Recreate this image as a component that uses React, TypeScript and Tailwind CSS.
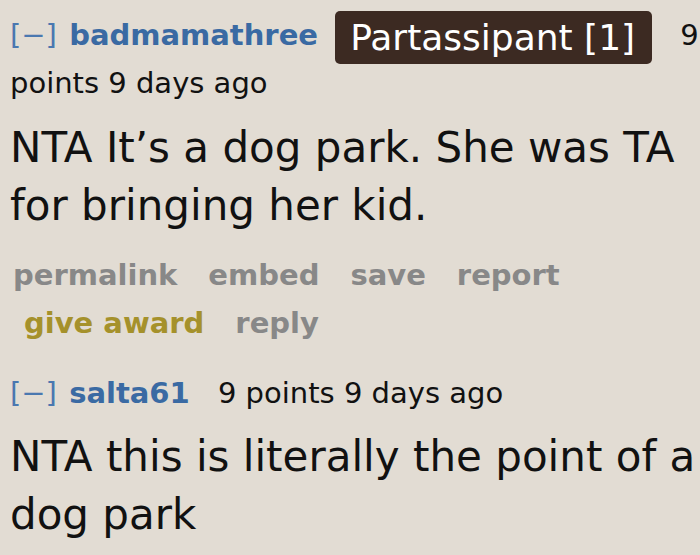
import React from 'react';

const font = { fontFamily: '"DejaVu Sans", Verdana, sans-serif' };

function Tagline({ user, flair, meta }: { user: string; flair?: string; meta: string }) {
  const [first, ...rest] = meta.split(' ');
  return (
    <p className="text-[29px] leading-[48px] text-[#111]">
      <span className="text-[#4a78b0]">[−]</span>{' '}
      <span className="ml-[3px] font-bold text-[#3a6aa3]">{user}</span>{' '}
      {flair && (
        <>
          <span className="mb-[-5px] ml-[8px] inline-block rounded-[5px] bg-[#3c2a22] pl-[15px] pr-[17px] align-[-5px] text-[36px] leading-[53px] text-white">
            {flair}
          </span>{' '}
        </>
      )}
      <span className="ml-[19px]">{first}</span>{' '}
      <span>{rest.join(' ')}</span>
    </p>
  );
}

export default function App() {
  return (
    <div className="h-[555px] w-[700px] overflow-hidden bg-[#e2dcd3] pl-[10px]" style={font}>
      {/* first comment */}
      <div className="pt-[11px]">
        <Tagline user="badmamathree" flair="Partassipant [1]" meta="9 points 9 days ago" />
        <div className="mt-[12px] text-[42px] leading-[58px] text-[#111]">
          NTA It’s a dog park. She was TA for bringing her kid.
        </div>
        <ul className="mt-[16px] flex flex-wrap gap-x-[31px] pl-[3px] text-[29px] font-bold leading-[48px] text-[#888]">
          <li>permalink</li>
          <li>embed</li>
          <li>save</li>
          <li>report</li>
          <li className="ml-[11px] text-[#a5912b]">give award</li>
          <li>reply</li>
        </ul>
      </div>

      {/* second comment */}
      <div className="mt-[22px]">
        <Tagline user="salta61" meta="9 points 9 days ago" />
        <div className="mt-[11px] text-[42px] leading-[58px] text-[#111]">
          NTA this is literally the point of a dog park
        </div>
      </div>
    </div>
  );
}
